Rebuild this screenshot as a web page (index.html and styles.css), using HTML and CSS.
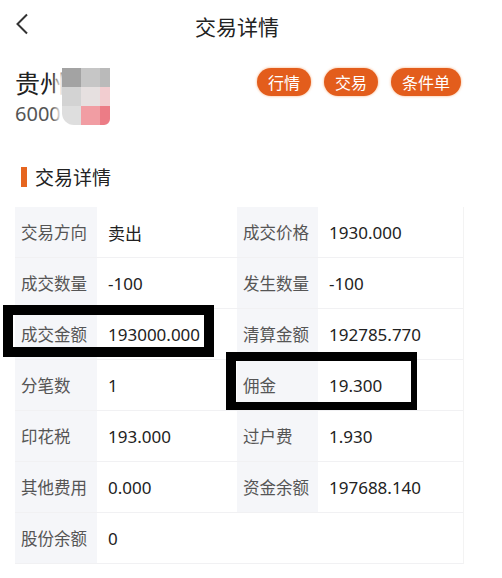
FILE: index.html
```html
<!DOCTYPE html>
<html lang="zh">
<head>
    <meta charset="UTF-8">
    <meta name="viewport" content="width=device-width, initial-scale=1.0">
    <title>交易详情</title>
    <link rel="stylesheet" href="styles.css">
</head>
<body>

    <div class="nav">
        <svg class="back" width="14" height="22" viewBox="0 0 14 22">
            <path d="M12 1.5 L2.5 11 L12 20.5" fill="none" stroke="#333" stroke-width="2"/>
        </svg>
        <div class="nav-title">交易详情</div>
    </div>

    <div class="stock">
        <div class="stock-info">
            <div class="stock-name">贵州</div>
            <div class="stock-code">6000</div>
            <div class="mosaic">
                <span style="background:#a3a3a3"></span>
                <span style="background:#c6c6c6"></span>
                <span style="background:#bababa"></span>
                <span style="background:#d3d3d3"></span>
                <span style="background:#e6e0e0"></span>
                <span style="background:#f2cdd0"></span>
                <span style="background:#dedede"></span>
                <span style="background:#f19da3"></span>
                <span style="background:#ec7c86"></span>
            </div>
        </div>
        <div class="actions">
            <button class="pill">行情</button>
            <button class="pill">交易</button>
            <button class="pill">条件单</button>
        </div>
    </div>

    <div class="section-title">交易详情</div>

    <div class="detail">
        <div class="cell label">交易方向</div>
        <div class="cell value">卖出</div>
        <div class="cell label">成交价格</div>
        <div class="cell value">1930.000</div>

        <div class="cell label">成交数量</div>
        <div class="cell value">-100</div>
        <div class="cell label">发生数量</div>
        <div class="cell value">-100</div>

        <div class="cell label">成交金额</div>
        <div class="cell value">193000.000</div>
        <div class="cell label">清算金额</div>
        <div class="cell value">192785.770</div>

        <div class="cell label">分笔数</div>
        <div class="cell value">1</div>
        <div class="cell label">佣金</div>
        <div class="cell value">19.300</div>

        <div class="cell label">印花税</div>
        <div class="cell value">193.000</div>
        <div class="cell label">过户费</div>
        <div class="cell value">1.930</div>

        <div class="cell label">其他费用</div>
        <div class="cell value">0.000</div>
        <div class="cell label">资金余额</div>
        <div class="cell value">197688.140</div>

        <div class="cell label">股份余额</div>
        <div class="cell value wide">0</div>

        <div class="mark mark-amount"></div>
        <div class="mark mark-fee"></div>
    </div>

</body>
</html>
```

FILE: styles.css
```css
body {
    margin: 0;
    background: #fff;
    font-family: 'Noto Sans', 'Noto Sans CJK SC', sans-serif;
    color: #222;
    width: 502px;
    height: 578px;
    overflow: hidden;
}

.nav {
    position: relative;
    width: 474px;
    height: 52px;
    display: flex;
    align-items: center;
    justify-content: center;
}

.back {
    position: absolute;
    left: 15px;
    top: 13px;
}

.nav-title {
    font-size: 21px;
    color: #222;
    margin-top: -1px;
}

.stock {
    display: flex;
    justify-content: space-between;
    align-items: flex-start;
    width: 446px;
    padding: 14px 0 0 15px;
    height: 100px;
}

.stock-info {
    position: relative;
}

.stock-name {
    font-size: 25px;
    line-height: 34px;
    color: #222;
}

.stock-code {
    font-size: 20px;
    line-height: 26px;
    color: #555;
    margin-top: 1px;
}

.mosaic {
    position: absolute;
    left: 47px;
    top: 2px;
    width: 48px;
    height: 57px;
    display: grid;
    grid-template-columns: 19px 19px 10px;
    grid-template-rows: 19px 19px 19px;
    border-radius: 0 0 6px 12px;
    overflow: hidden;
    box-shadow: -6px 4px 6px rgba(255, 255, 255, 0.9);
}

.actions {
    display: flex;
    gap: 13px;
    margin-top: 2px;
}

.pill {
    height: 28px;
    padding: 0 11px;
    border: none;
    border-radius: 14px;
    background: #e35d1c;
    color: #fff;
    font-family: 'Noto Sans CJK SC', sans-serif;
    font-size: 16px;
    line-height: 28px;
    box-shadow: 0 0 2px 1px rgba(250, 190, 150, 0.6);
}

.section-title {
    display: flex;
    align-items: center;
    gap: 8px;
    margin-left: 21px;
    height: 22px;
    font-size: 19px;
    color: #222;
}

.section-title::before {
    content: '';
    width: 6px;
    height: 20px;
    background: #e6651f;
}

.detail {
    position: relative;
    margin: 19px 0 0 15px;
    width: 448px;
    display: grid;
    grid-template-columns: 82px 140px 81px 145px;
    grid-auto-rows: 51px;
    border-right: 1px solid #f3f3f3;
}

.cell {
    display: flex;
    align-items: center;
    border-bottom: 1px solid #f1f1f3;
    box-sizing: border-box;
    font-size: 17px;
}

.label {
    background: #f5f6f9;
    color: #555;
    padding-left: 6px;
    font-size: 16.5px;
}

.value {
    color: #222;
    padding-left: 11px;
}

.value.wide {
    grid-column: span 3;
}

.mark {
    position: absolute;
    border: 10px solid #000;
    box-sizing: border-box;
}

.mark-amount {
    left: -12px;
    top: 98px;
    width: 211px;
    height: 52px;
}

.mark-fee {
    left: 211px;
    top: 145px;
    width: 191px;
    height: 58px;
    border-width: 9px 6px 8px 10px;
}
```
